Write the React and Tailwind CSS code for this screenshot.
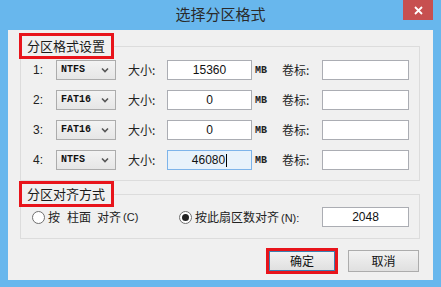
import React from "react";

const cjk = { fontFamily: '"Noto Sans CJK SC", "Noto Sans", sans-serif' };
const mono = { fontFamily: '"Liberation Mono", "DejaVu Sans Mono", monospace' };
const sans = { fontFamily: '"Liberation Sans", Arial, sans-serif' };

function Chevron() {
  return (
    <svg width="8" height="6" viewBox="0 0 8 6" className="shrink-0">
      <path d="M1 1.5 L4 4.5 L7 1.5" fill="none" stroke="#555" strokeWidth="1.6" />
    </svg>
  );
}

function Combo({ value }) {
  return (
    <div className="w-[60px] h-[20px] flex items-center justify-between pl-[4px] pr-[6px] border border-[#acacac] bg-gradient-to-b from-[#f3f3f3] to-[#e6e6e6]">
      <span className="text-[10px] font-bold text-[#111] leading-none" style={mono}>{value}</span>
      <Chevron />
    </div>
  );
}

function Field({ value, focused, className = "" }) {
  return (
    <div
      className={`h-[20px] flex items-center justify-center border text-[12px] text-[#111] ${
        focused ? "border-[#7eb4ea] bg-[#e8f2fb]" : "border-[#abadb3] bg-white"
      } ${className}`}
      style={sans}
    >
      <span>{value}</span>
      {focused && <span className="w-px h-[13px] bg-black ml-[1px]" />}
    </div>
  );
}

function Legend({ children }) {
  return (
    <legend
      className="-ml-[2px] border-[3px] border-[#e8141b] pl-[5px] pr-[6px] text-[13px] leading-[20px] text-[#1a1a1a]"
      style={cjk}
    >
      {children}
    </legend>
  );
}

function Row({ n, fs, size, focused }) {
  return (
    <div className="flex items-center h-[20px]">
      <span className="w-[35px] pl-[12px] text-[12px] text-[#222]" style={sans}>{n}:</span>
      <Combo value={fs} />
      <span className="ml-[12px] w-[39px] text-[12px] text-[#222]" style={cjk}>大小:</span>
      <Field value={size} focused={focused} className="w-[85px]" />
      <span className="ml-[3px] w-[27px] text-[10px] font-bold text-[#222]" style={mono}>MB</span>
      <span className="w-[40px] text-[12px] text-[#222]" style={cjk}>卷标:</span>
      <Field value="" className="w-[87px]" />
    </div>
  );
}

function Radio({ checked }) {
  return (
    <span className="w-[13px] h-[13px] rounded-full border border-[#707070] bg-white flex items-center justify-center shrink-0">
      {checked && <span className="w-[7px] h-[7px] rounded-full bg-[#222]" />}
    </span>
  );
}

export default function App() {
  return (
    <div className="w-[441px] h-[287px] bg-[#68b7ed] flex flex-col overflow-hidden">
      <div className="relative h-[30px] flex items-center justify-center shrink-0">
        <span className="text-[15px] text-[#2a2a2a] -mt-[2px]" style={cjk}>选择分区格式</span>
        <div className="absolute right-[8px] top-0 w-[30px] h-[20px] bg-[#c75050] flex items-center justify-center">
          <svg width="9" height="9" viewBox="0 0 9 9">
            <path d="M1 1 L8 8 M8 1 L1 8" stroke="white" strokeWidth="1.8" />
          </svg>
        </div>
      </div>
      <div className="mx-[8px] mb-[7px] flex-1 bg-[#f0f0f0] pl-[12px] pr-[13px] pt-[3px] flex flex-col">
        <fieldset className="border border-[#dcdcdc] m-0 p-0">
          <Legend>分区格式设置</Legend>
          <div className="flex flex-col gap-[10px] pt-[1px] pb-[10px]">
            <Row n="1" fs="NTFS" size="15360" />
            <Row n="2" fs="FAT16" size="0" />
            <Row n="3" fs="FAT16" size="0" />
            <Row n="4" fs="NTFS" size="46080" focused />
          </div>
        </fieldset>
        <fieldset className="border border-[#dcdcdc] m-0 p-0">
          <Legend>分区对齐方式</Legend>
          <div className="flex items-center h-[20px] mb-[11px]">
            <div className="ml-[11px] w-[147px] flex items-center gap-[3px]">
              <Radio />
              <span className="flex items-center text-[12px] text-[#222]" style={cjk}>
                <span>按</span>
                <span className="ml-[7px]">柱面</span>
                <span className="ml-[6px]">对齐</span>
                <span style={sans} className="ml-[2px] text-[11px]">(C)</span>
              </span>
            </div>
            <div className="w-[143px] flex items-center gap-[3px]">
              <Radio checked />
              <span className="text-[12px] text-[#222]" style={cjk}>按此扇区数对齐<span style={sans} className="ml-[2px] text-[11px]">(N):</span></span>
            </div>
            <Field value="2048" className="w-[87px]" />
          </div>
        </fieldset>
        <div className="mt-[9px] flex justify-end items-center gap-[10px] pr-[1px]">
          <div className="w-[72px] h-[26px] border-[3px] border-[#e8141b]">
            <div className="w-full h-full border border-[#3c7fb1] bg-gradient-to-b from-[#f2f2f2] to-[#e0e0e0] flex items-center justify-center text-[12px] text-[#111]" style={cjk}>确定</div>
          </div>
          <div className="w-[71px] h-[22px] border border-[#acacac] bg-gradient-to-b from-[#f2f2f2] to-[#e0e0e0] flex items-center justify-center text-[12px] text-[#111]" style={cjk}>取消</div>
        </div>
      </div>
    </div>
  );
}
